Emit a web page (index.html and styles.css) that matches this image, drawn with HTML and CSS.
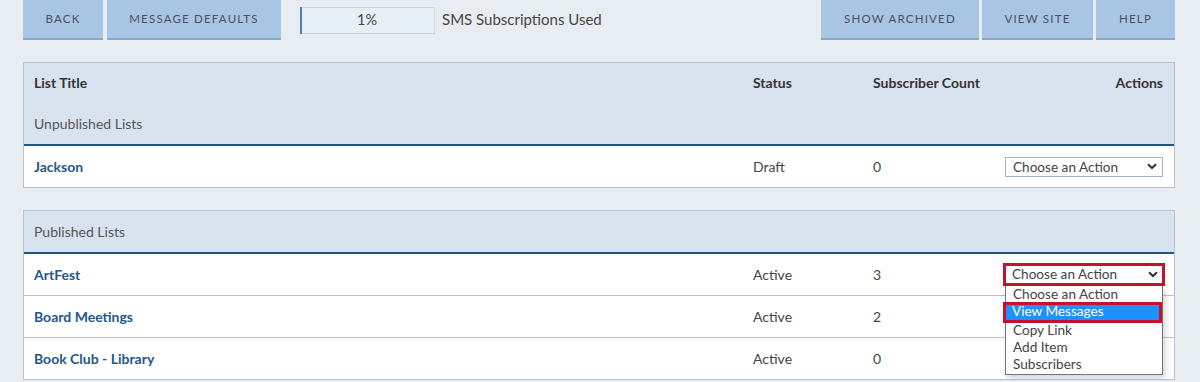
FILE: index.html
```html
<!DOCTYPE html>
<html lang="en">
<head>
<meta charset="utf-8">
<title>SMS Lists</title>
<link rel="stylesheet" href="styles.css">
</head>
<body>
<div class="page">
  <div class="toolbar">
    <div class="group">
      <a class="btn btn-back">Back</a>
      <a class="btn btn-defaults">Message Defaults</a>
      <div class="usage">
        <div class="meter"><div class="meter-fill" style="width:1%"></div><span class="meter-label">1%</span></div>
        <span class="usage-text">SMS Subscriptions Used</span>
      </div>
    </div>
    <div class="group group-right">
      <a class="btn btn-archived">Show Archived</a>
      <a class="btn btn-site">View Site</a>
      <a class="btn btn-help">Help</a>
    </div>
  </div>

  <div class="panel">
    <div class="row head">
      <div class="cell">List Title</div>
      <div class="cell">Status</div>
      <div class="cell">Subscriber Count</div>
      <div class="cell right">Actions</div>
    </div>
    <div class="row section"><div class="cell">Unpublished Lists</div></div>
    <div class="row data first">
      <div class="cell title">Jackson</div>
      <div class="cell">Draft</div>
      <div class="cell">0</div>
      <div class="cell right"><div class="select"><span>Choose an Action</span><svg class="chev" viewBox="0 0 10 7" width="10" height="7"><path d="M1 1.2 L5 5 L9 1.2" fill="none" stroke="#333" stroke-width="2"/></svg></div></div>
    </div>
  </div>

  <div class="panel panel-2">
    <div class="row section top"><div class="cell">Published Lists</div></div>
    <div class="row data first">
      <div class="cell title">ArtFest</div>
      <div class="cell">Active</div>
      <div class="cell">3</div>
      <div class="cell right">
        <div class="select-wrap">
          <div class="select open"><span>Choose an Action</span><svg class="chev" viewBox="0 0 10 7" width="10" height="7"><path d="M1 1.2 L5 5 L9 1.2" fill="none" stroke="#333" stroke-width="2"/></svg></div>
          <ul class="menu">
            <li>Choose an Action</li>
            <li class="active">View Messages</li>
            <li>Copy Link</li>
            <li>Add Item</li>
            <li>Subscribers</li>
          </ul>
        </div>
      </div>
    </div>
    <div class="row data">
      <div class="cell title">Board Meetings</div>
      <div class="cell">Active</div>
      <div class="cell">2</div>
      <div class="cell right"></div>
    </div>
    <div class="row data">
      <div class="cell title">Book Club - Library</div>
      <div class="cell">Active</div>
      <div class="cell">0</div>
      <div class="cell right"></div>
    </div>
  </div>
</div>
</body>
</html>
```

FILE: styles.css
```css
* { box-sizing: border-box; }
html, body { margin: 0; padding: 0; }
body {
  background: #e8edf2;
  font-family: Lato, "Open Sans", sans-serif;
  color: #444;
  font-size: 14px;
  overflow: hidden;
}
.page { width: 1152px; margin-left: 23px; }

.toolbar {
  display: flex;
  justify-content: space-between;
  align-items: flex-start;
}
.group { display: flex; gap: 4px; align-items: flex-start; }
.group-right { gap: 3px; }
.btn {
  display: flex;
  align-items: center;
  justify-content: center;
  height: 40px;
  background: #a8c6e3;
  border-bottom: 2px solid #86a8cc;
  color: #4c4f5e;
  text-transform: uppercase;
  font-size: 11.5px;
  letter-spacing: 1.2px;
  padding-bottom: 1px;
}
.btn-back { width: 80px; }
.btn-defaults { width: 174px; }
.btn-archived { width: 158px; }
.btn-site { width: 111px; }
.btn-help { width: 79px; }

.usage { display: flex; align-items: center; margin-left: 15px; margin-top: 7px; gap: 7px; }
.meter {
  position: relative;
  width: 135px;
  height: 27px;
  background: #e6eef6;
  border: 1px solid #c9d5e1;
  border-left: none;
  display: flex;
  align-items: center;
  justify-content: center;
  padding-bottom: 3px;
}
.meter-fill {
  position: absolute;
  left: 0; top: -1px; bottom: -1px;
  min-width: 2px;
  background: #4d7fb0;
}
.meter-label { font-size: 14.5px; color: #444; }
.usage-text { font-size: 15px; color: #444; margin-top: -3px; }

.panel {
  margin-top: 22px;
  border: 1px solid #b5c3d4;
  background: #fff;
}
.panel-2 { margin-top: 22px; }
.row {
  display: grid;
  grid-template-columns: 718px 120px 130px 1fr;
  align-items: center;
  height: 41px;
}
.cell { padding: 0 11px; }
.cell:first-child { padding-left: 10px; }
.right { text-align: right; display: flex; justify-content: flex-end; }
.head { background: #d9e3ef; font-weight: 700; color: #333; height: 40px; padding-bottom: 1px; }
.section { background: #d9e3ef; color: #555; border-bottom: 2px solid #1b5788; height: 43px; grid-template-columns: 1fr; }
.section.top { height: 43px; }
.data { height: 42px; border-top: 1px solid #b5c3d4; }
.data.first { border-top: none; height: 41px; }
.title { font-weight: 700; color: #24578a; }

.select {
  display: flex;
  align-items: center;
  justify-content: space-between;
  width: 158px;
  height: 20px;
  border: 1px solid #a9b3bf;
  background: #fff;
  padding: 0 5px 0 7px;
  color: #444;
  font-size: 13.6px;
  text-align: left;
}
.chev { display: block; }
.select-wrap { position: relative; width: 158px; height: 20px; }
.select.open {
  position: absolute;
  left: -2px; top: -2px;
  width: 162px;
  height: 23px;
  border: 3px solid #c8102e;
  padding: 0 4px 0 6px;
}
.menu {
  position: absolute;
  left: 0; top: 21px;
  width: 158px;
  margin: 0;
  padding: 0 0 1px;
  list-style: none;
  background: #fff;
  border: 1px solid #767676;
  border-top: none;
  box-shadow: 2px 3px 6px rgba(0,0,0,0.18);
  text-align: left;
  z-index: 5;
}
.menu li {
  height: 17px;
  line-height: 17px;
  padding-left: 7px;
  font-size: 13.6px;
  color: #444;
}
.menu li.active {
  background: #1e90ff;
  color: #fff;
  outline: 3px solid #c8102e;
  outline-offset: -1px;
  margin: 1px 2px 1px -1px;
  height: 17px;
  line-height: 15px;
}
```
